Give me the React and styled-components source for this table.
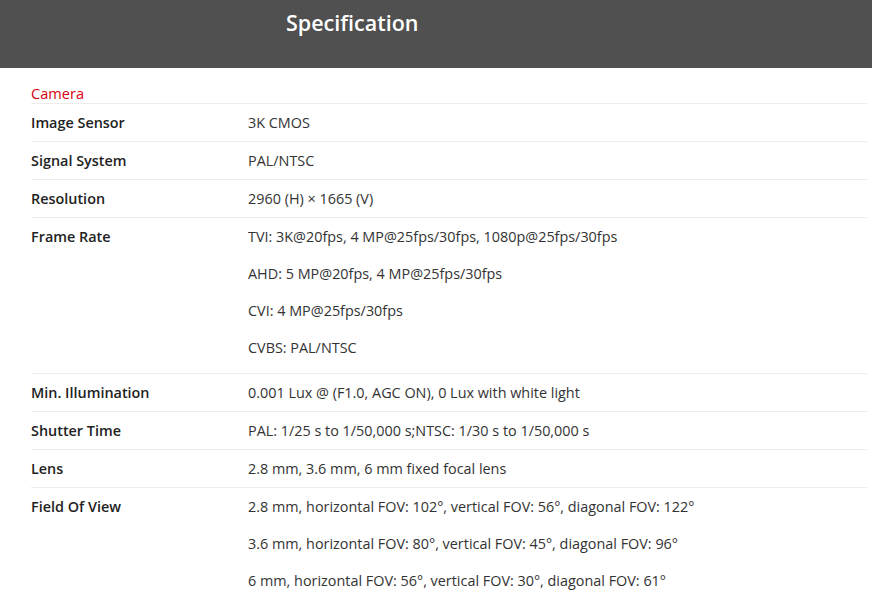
import React from "react";
import styled, { createGlobalStyle } from "styled-components";

const Global = createGlobalStyle`
  html, body { margin: 0; padding: 0; background: #fff; }
  body { font-family: "Open Sans", "Noto Sans", Arial, sans-serif; }
`;

const Header = styled.header`
  height: 68px;
  background: #505050;
  box-sizing: border-box;
  padding: 8px 0 0 286px;
`;

const Title = styled.h1`
  margin: 0;
  color: #fff;
  font-size: 21.5px;
  line-height: 30px;
  font-weight: 600;
`;

const Content = styled.section`
  padding: 16px 5px 0 31px;
`;

const SectionTitle = styled.h2`
  margin: 0;
  color: #d7000f;
  font-size: 14.6px;
  font-weight: 400;
  line-height: 19px;
  border-bottom: 1px solid #ececec;
`;

const Row = styled.div`
  display: grid;
  grid-template-columns: 217px 1fr;
  padding: ${(p) => (p.$multi ? "9px 0 15px" : "9px 0 8px")};
  border-bottom: 1px solid #ececec;
  font-size: 14.4px;
  line-height: 20px;
`;

const Label = styled.div`
  font-weight: 600;
  color: #222;
`;

const Values = styled.div`
  display: flex;
  flex-direction: column;
  gap: 17px;
  color: #333;
`;

const rows = [
  ["Image Sensor", ["3K CMOS"]],
  ["Signal System", ["PAL/NTSC"]],
  ["Resolution", ["2960 (H) × 1665 (V)"]],
  [
    "Frame Rate",
    [
      "TVI: 3K@20fps, 4 MP@25fps/30fps, 1080p@25fps/30fps",
      "AHD: 5 MP@20fps, 4 MP@25fps/30fps",
      "CVI: 4 MP@25fps/30fps",
      "CVBS: PAL/NTSC",
    ],
  ],
  ["Min. Illumination", ["0.001 Lux @ (F1.0, AGC ON), 0 Lux with white light"]],
  ["Shutter Time", ["PAL: 1/25 s to 1/50,000 s;NTSC: 1/30 s to 1/50,000 s"]],
  ["Lens", ["2.8 mm, 3.6 mm, 6 mm fixed focal lens"]],
  [
    "Field Of View",
    [
      "2.8 mm, horizontal FOV: 102°, vertical FOV: 56°, diagonal FOV: 122°",
      "3.6 mm, horizontal FOV: 80°, vertical FOV: 45°, diagonal FOV: 96°",
      "6 mm, horizontal FOV: 56°, vertical FOV: 30°, diagonal FOV: 61°",
    ],
  ],
];

export default function App() {
  return (
    <>
      <Global />
      <Header>
        <Title>Specification</Title>
      </Header>
      <Content>
        <SectionTitle>Camera</SectionTitle>
        {rows.map(([label, vals]) => (
          <Row key={label} $multi={vals.length > 1}>
            <Label>{label}</Label>
            <Values>
              {vals.map((v) => (
                <span key={v}>{v}</span>
              ))}
            </Values>
          </Row>
        ))}
      </Content>
    </>
  );
}
